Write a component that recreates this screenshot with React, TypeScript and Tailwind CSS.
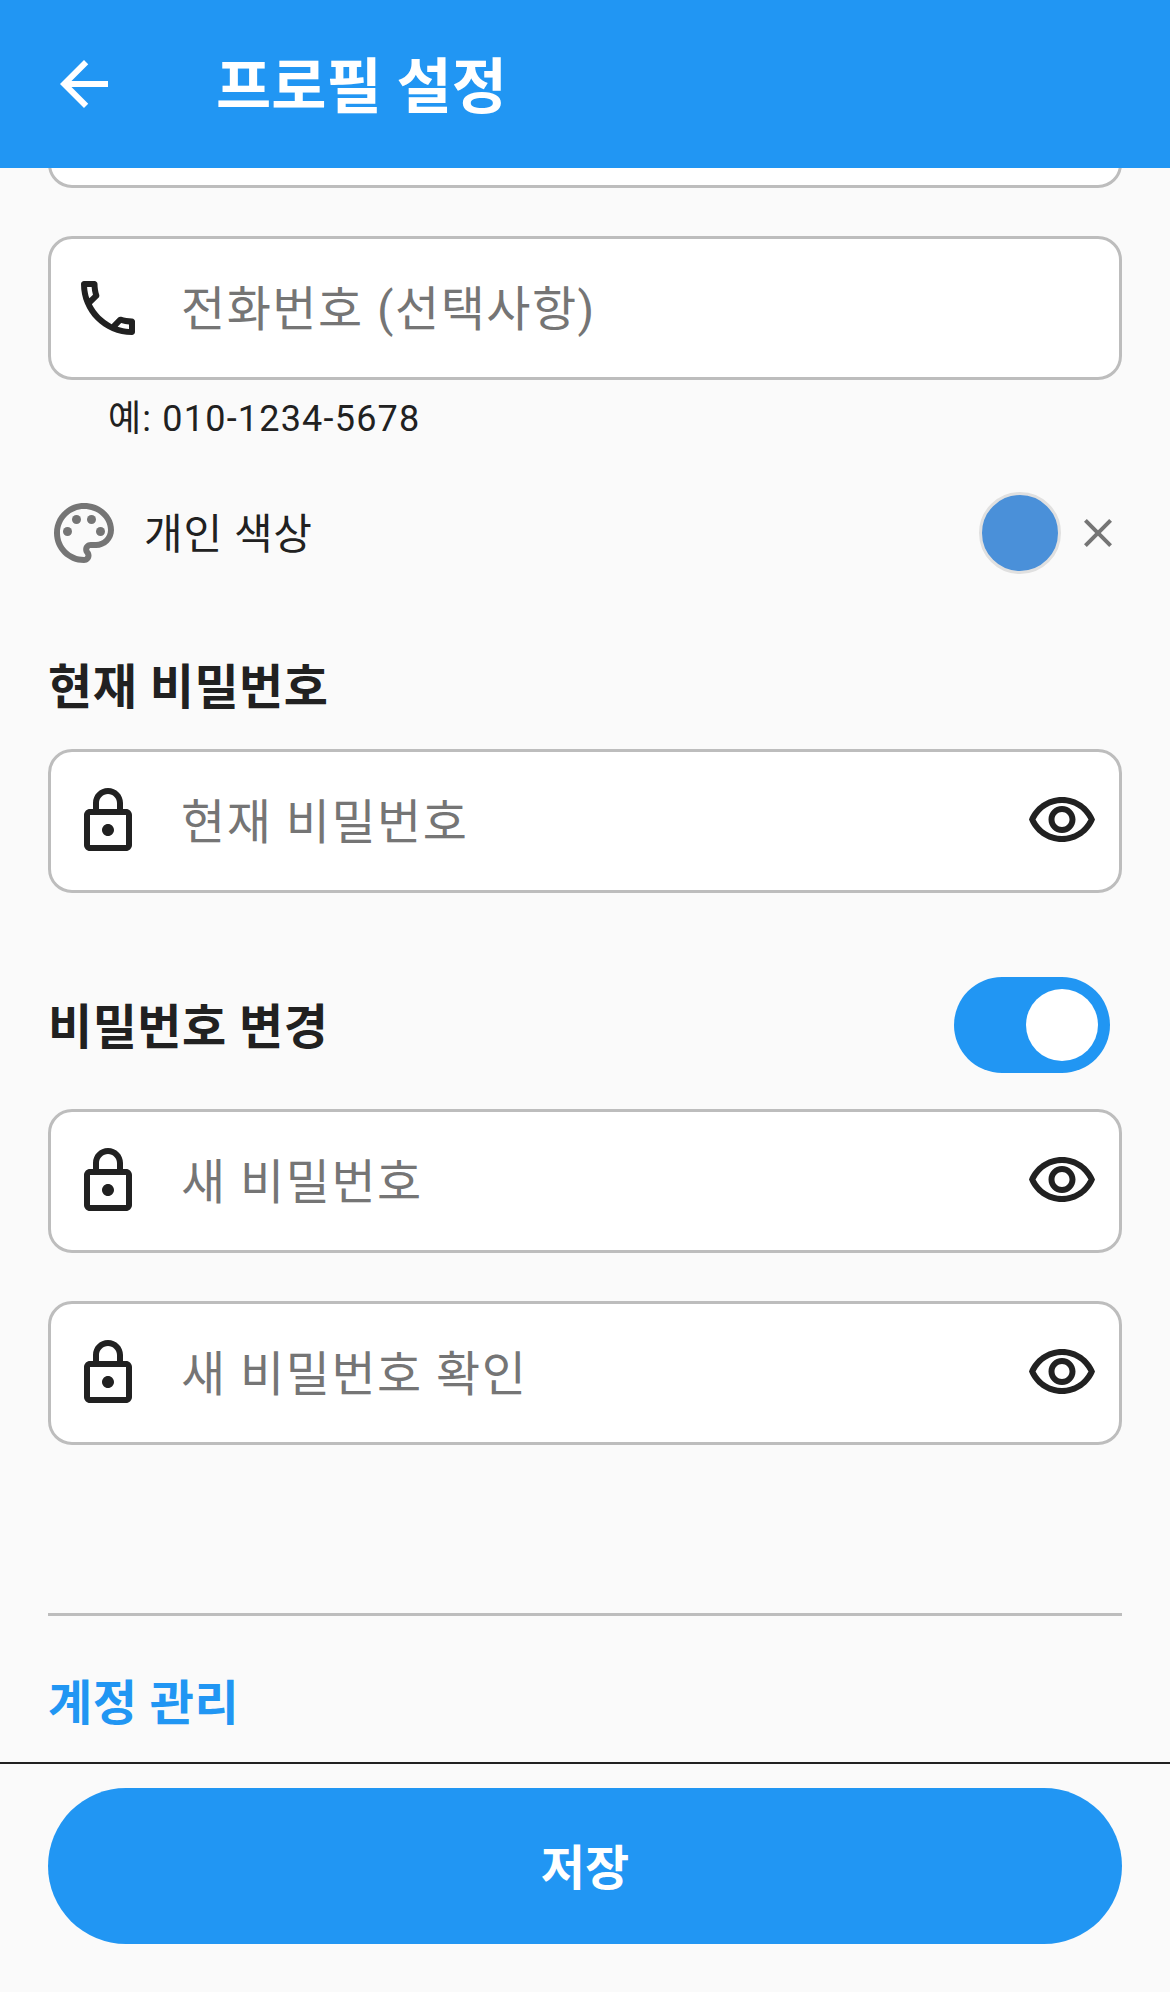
import type { ReactNode } from "react";

const CJK = "font-['Roboto','Noto_Sans_CJK_KR',sans-serif]";

function Icon({ d, className, children }: { d?: string; className?: string; children?: ReactNode }) {
  return (
    <svg viewBox="0 0 24 24" className={`w-[72px] h-[72px] shrink-0 fill-current ${className ?? ""}`}>
      {d && <path d={d} />}
      {children}
    </svg>
  );
}

const PHONE =
  "M6.54 5c.06.89.21 1.76.45 2.59l-1.2 1.2c-.41-1.2-.67-2.47-.76-3.79h1.51m9.86 12.02c.85.24 1.72.39 2.6.45v1.49c-1.32-.09-2.59-.35-3.8-.75l1.2-1.19M7.5 3H4c-.55 0-1 .45-1 1 0 9.39 7.61 17 17 17 .55 0 1-.45 1-1v-3.49c0-.55-.45-1-1-1-1.24 0-2.45-.2-3.57-.57-.1-.04-.21-.05-.31-.05-.26 0-.51.1-.71.29l-2.2 2.2c-2.83-1.45-5.15-3.76-6.59-6.59l2.2-2.2c.28-.28.36-.67.25-1.02C8.7 6.45 8.5 5.25 8.5 4c0-.55-.45-1-1-1z";
const LOCK =
  "M18 8h-1V6c0-2.76-2.24-5-5-5S7 3.24 7 6v2H6c-1.1 0-2 .9-2 2v10c0 1.1.9 2 2 2h12c1.1 0 2-.9 2-2V10c0-1.1-.9-2-2-2zM9 6c0-1.66 1.34-3 3-3s3 1.34 3 3v2H9V6zm9 14H6V10h12v10zm-6-3c1.1 0 2-.9 2-2s-.9-2-2-2-2 .9-2 2 .9 2 2 2z";
const EYE =
  "M12 6c3.79 0 7.17 2.13 8.82 5.5C19.17 14.87 15.79 17 12 17s-7.17-2.13-8.82-5.5C4.83 8.13 8.21 6 12 6m0-2C7 4 2.73 7.11 1 11.5 2.73 15.89 7 19 12 19s9.27-3.11 11-7.5C21.27 7.11 17 4 12 4zm0 5c1.38 0 2.5 1.12 2.5 2.5S13.38 14 12 14s-2.5-1.12-2.5-2.5S10.62 9 12 9m0-2c-2.48 0-4.5 2.02-4.5 4.5S9.52 16 12 16s4.5-2.02 4.5-4.5S14.48 7 12 7z";
const PALETTE =
  "M12 22C6.49 22 2 17.51 2 12S6.49 2 12 2s10 4.04 10 9c0 3.31-2.69 6-6 6h-1.77c-.28 0-.5.22-.5.5 0 .12.05.23.13.33.41.47.64 1.06.64 1.67 0 1.38-1.12 2.5-2.5 2.5zm0-18c-4.41 0-8 3.59-8 8s3.59 8 8 8c.28 0 .5-.22.5-.5 0-.16-.08-.28-.14-.35-.41-.46-.63-1.05-.63-1.65 0-1.38 1.12-2.5 2.5-2.5H16c2.21 0 4-1.79 4-4 0-3.86-3.59-7-8-7z";

function Field({ icon, placeholder, eye, className }: { icon: string; placeholder: string; eye?: boolean; className?: string }) {
  return (
    <div className={`h-[144px] flex items-center px-[21px] bg-white border-[3px] border-[#bdbdbd] rounded-[24px] ${className ?? ""}`}>
      <Icon d={icon} className="text-[#212121]" />
      <input
        readOnly
        placeholder={placeholder}
        className="flex-1 min-w-0 ml-[37px] pt-[3px] bg-transparent outline-none text-[48px] tracking-[1.5px] placeholder:text-[#757575]"
      />
      {eye && <Icon d={EYE} className="text-[#212121]" />}
    </div>
  );
}

export default function App() {
  return (
    <div className={`w-[1170px] h-[1992px] flex flex-col bg-[#fafafa] overflow-hidden ${CJK}`}>
      <header className="h-[168px] shrink-0 flex items-center pl-[48px] bg-[#2196f3] text-white">
        <svg viewBox="0 0 24 24" className="w-[72px] h-[72px] fill-current">
          <path d="M20 11H7.83l5.59-5.59L12 4l-8 8 8 8 1.41-1.41L7.83 13H20v-2z" />
        </svg>
        <h1 className="ml-[96px] pt-[8px] text-[60px] leading-none font-bold">프로필 설정</h1>
      </header>

      <main className="flex-1 min-h-0 overflow-hidden px-[48px]">
        {/* scrolled: only the bottom of the field above is visible */}
        <div className="h-[144px] -mt-[124px] bg-white border-[3px] border-[#bdbdbd] rounded-[24px]" />

        <Field icon={PHONE} placeholder="전화번호 (선택사항)" className="mt-[48px]" />
        <p className="mt-[15px] pl-[60px] text-[36px] leading-[48px] tracking-[1.2px] text-[#212121]">예: 010-1234-5678</p>

        <div className="mt-[54px] h-[72px] flex items-center">
          <Icon d={PALETTE} className="text-[#757575]">
            <circle cx="6.5" cy="11.5" r="1.5" />
            <circle cx="9.5" cy="7.5" r="1.5" />
            <circle cx="14.5" cy="7.5" r="1.5" />
            <circle cx="17.5" cy="11.5" r="1.5" />
          </Icon>
          <span className="ml-[24px] pt-[4px] text-[42px] leading-none tracking-[0.75px] text-[#212121]">개인 색상</span>
          <span className="ml-auto w-[82px] h-[82px] rounded-full bg-[#4a90d9] border-[3px] border-[#e0e0e0]" />
          <svg viewBox="0 0 24 24" className="ml-[13px] w-[48px] h-[48px] fill-[#757575]">
            <path d="M19 6.41 17.59 5 12 10.59 6.41 5 5 6.41 10.59 12 5 17.59 6.41 19 12 13.41 17.59 19 19 17.59 13.41 12z" />
          </svg>
        </div>

        <h2 className="mt-[86px] text-[48px] leading-[66px] tracking-[0.5px] font-bold text-[#212121]">현재 비밀번호</h2>
        <Field icon={LOCK} placeholder="현재 비밀번호" eye className="mt-[28px]" />

        <div className="mt-[84px] h-[96px] flex items-center justify-between">
          <h2 className="pt-[6px] text-[48px] leading-[66px] tracking-[0.5px] font-bold text-[#212121]">비밀번호 변경</h2>
          <div className="mr-[12px] w-[156px] h-[96px] flex items-center justify-end pr-[12px] rounded-full bg-[#2196f3]">
            <span className="w-[72px] h-[72px] rounded-full bg-white" />
          </div>
        </div>

        <Field icon={LOCK} placeholder="새 비밀번호" eye className="mt-[36px]" />
        <Field icon={LOCK} placeholder="새 비밀번호 확인" eye className="mt-[48px]" />

        <div className="mt-[168px] h-[3px] bg-[#bdbdbd]" />
        <button className="block mt-[55px] text-[48px] leading-[66px] tracking-[0.5px] font-bold text-[#2196f3]">계정 관리</button>
      </main>

      <footer className="h-[230px] shrink-0 px-[48px] pt-[24px] border-t-[2px] border-[#212121]">
        <button className="w-full h-[156px] pt-[6px] rounded-full bg-[#2196f3] text-white text-[48px] font-bold">저장</button>
      </footer>
    </div>
  );
}
